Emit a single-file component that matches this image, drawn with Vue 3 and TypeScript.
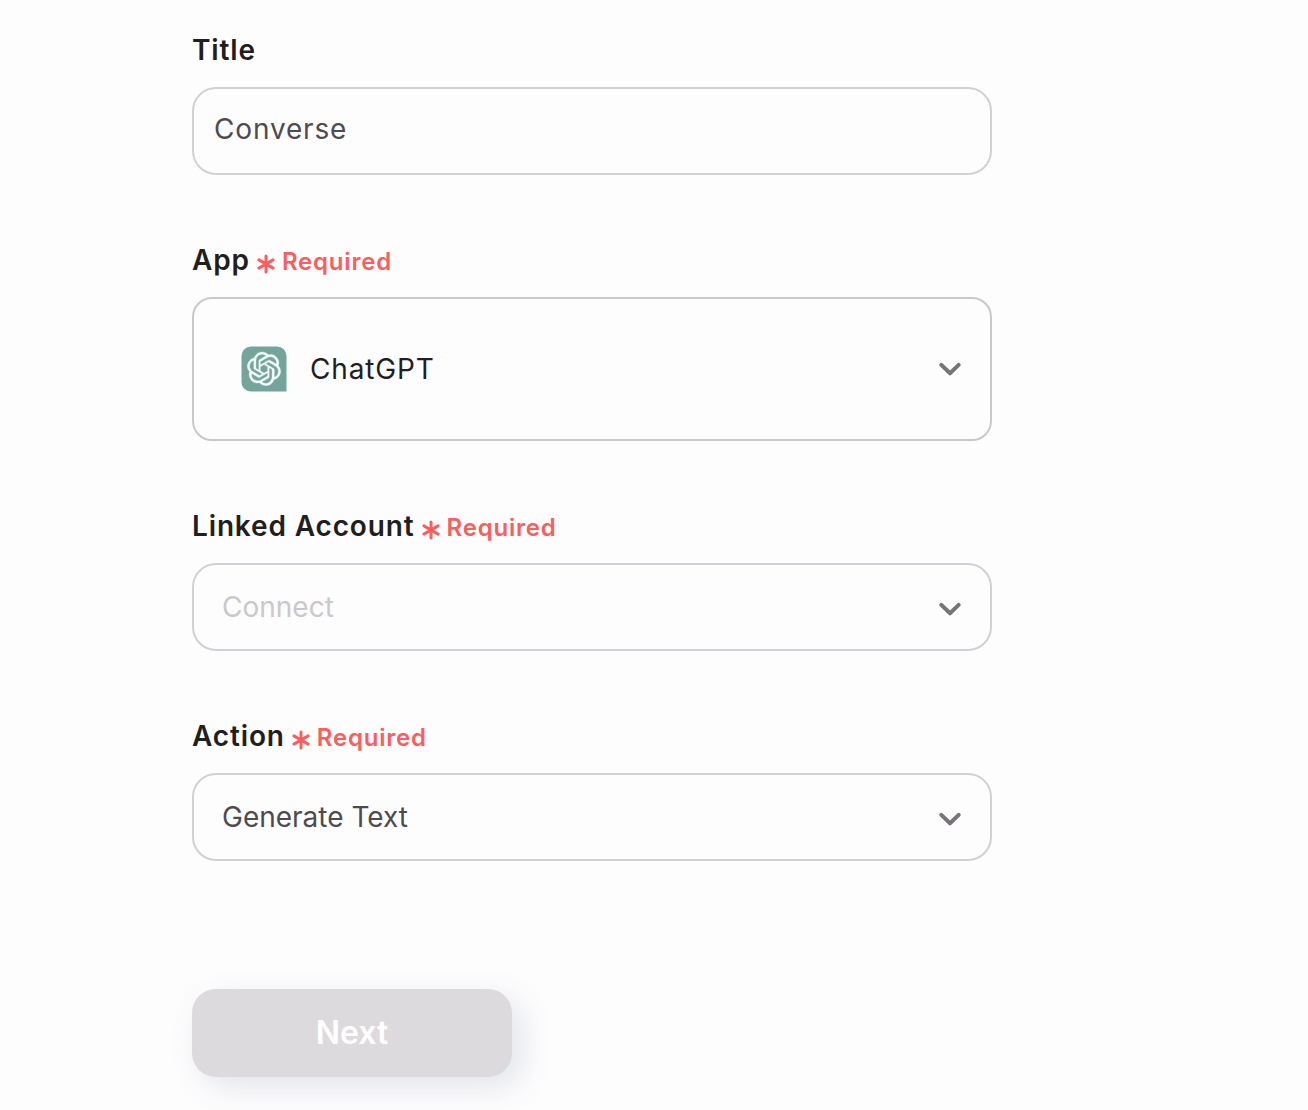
<script setup lang="ts">
interface Field {
  id: string
  label: string
  required: boolean
  kind: 'input' | 'app' | 'select'
  value: string
  placeholder?: boolean
}

const fields: Field[] = [
  { id: 'title', label: 'Title', required: false, kind: 'input', value: 'Converse' },
  { id: 'app', label: 'App', required: true, kind: 'app', value: 'ChatGPT' },
  { id: 'account', label: 'Linked Account', required: true, kind: 'select', value: 'Connect', placeholder: true },
  { id: 'action', label: 'Action', required: true, kind: 'select', value: 'Generate Text' },
]
</script>

<template>
  <main class="page">
    <form class="form" @submit.prevent>
      <section v-for="field in fields" :key="field.id" class="field">
        <div class="heading">
          <span class="label">{{ field.label }}</span>
          <span v-if="field.required" class="required">
            <svg class="star" width="18" height="20" viewBox="0 0 18 20" aria-hidden="true">
              <path d="M9 1.9V18.1M1.9 5.9L16.1 14.1M16.1 5.9L1.9 14.1" />
            </svg>
            <span class="required-text">Required</span>
          </span>
        </div>
        <div class="control" :class="[field.kind, { placeholder: field.placeholder }]">
          <svg v-if="field.kind === 'app'" class="logo" width="46" height="46" viewBox="0 0 46 46" aria-hidden="true">
            <path fill="#73a59a" d="M10 .5H36A9.5 9.5 0 0 1 45.500 10V45.500H10A9.500 9.500 0 0 1 .5 36V10A9.500 9.500 0 0 1 10 .5Z" />
            <g transform="translate(6.200 6) scale(1.4)">
              <path fill="#f4fbf9" stroke="#f4fbf9" stroke-width=".25" d="M22.2819 9.8211a5.9847 5.9847 0 0 0-.5157-4.9108 6.0462 6.0462 0 0 0-6.5098-2.9A6.0651 6.0651 0 0 0 4.9807 4.1818a5.9847 5.9847 0 0 0-3.9977 2.9 6.0462 6.0462 0 0 0 .7427 7.0966 5.98 5.98 0 0 0 .511 4.9107 6.051 6.051 0 0 0 6.5146 2.9001A5.9847 5.9847 0 0 0 13.2599 24a6.0557 6.0557 0 0 0 5.7718-4.2058 5.9894 5.9894 0 0 0 3.9977-2.9001 6.0557 6.0557 0 0 0-.7475-7.0729zm-9.022 12.6081a4.4755 4.4755 0 0 1-2.8764-1.0408l.1419-.0804 4.7783-2.7582a.7948.7948 0 0 0 .3927-.6813v-6.7369l2.02 1.1686a.071.071 0 0 1 .038.052v5.5826a4.504 4.504 0 0 1-4.4945 4.4944zm-9.6607-4.1254a4.4708 4.4708 0 0 1-.5346-3.0137l.142.0852 4.783 2.7582a.7712.7712 0 0 0 .7806 0l5.8428-3.3685v2.3324a.0804.0804 0 0 1-.0332.0615L9.74 19.9502a4.4992 4.4992 0 0 1-6.1408-1.6464zM2.3408 7.8956a4.485 4.485 0 0 1 2.3655-1.9728V11.6a.7664.7664 0 0 0 .3879.6765l5.8144 3.3543-2.0201 1.1685a.0757.0757 0 0 1-.071 0l-4.8303-2.7865A4.504 4.504 0 0 1 2.3408 7.872zm16.5963 3.8558L13.1038 8.364 15.1192 7.2a.0757.0757 0 0 1 .071 0l4.8303 2.7913a4.4944 4.4944 0 0 1-.6765 8.1042v-5.6772a.79.79 0 0 0-.407-.667zm2.0107-3.0231l-.142-.0852-4.7735-2.7818a.7759.7759 0 0 0-.7854 0L9.409 9.2297V6.8974a.0662.0662 0 0 1 .0284-.0615l4.8303-2.7866a4.4992 4.4992 0 0 1 6.6802 4.66zM8.3065 12.863l-2.02-1.1638a.0804.0804 0 0 1-.038-.0567V6.0742a4.4992 4.4992 0 0 1 7.3757-3.4537l-.142.0805L8.704 5.459a.7948.7948 0 0 0-.3927.6813zm1.0976-2.3654l2.602-1.4998 2.6069 1.4998v2.9994l-2.5974 1.4997-2.6067-1.4997Z" />
            </g>
          </svg>
          <span class="value">{{ field.value }}</span>
          <svg v-if="field.kind !== 'input'" class="chevron" width="24" height="16" viewBox="0 0 24 16" aria-hidden="true">
            <path d="M3.300 3.900L12 12.300L20.700 3.900" />
          </svg>
        </div>
      </section>
      <button class="next" type="submit">Next</button>
    </form>
  </main>
</template>

<style>
body {
  background: #fefdfe;
}
</style>

<style scoped>
.page {
  box-sizing: border-box;
  height: 1110px;
  overflow: hidden;
  padding: 32px 0 0 192px;
  background: #fefdfe;
  font-family: Inter, "Liberation Sans", sans-serif;
}

.form {
  display: flex;
  flex-direction: column;
  width: 800px;
}

.field {
  display: flex;
  flex-direction: column;
  gap: 19px;
  margin-bottom: 67px;
}

.heading {
  display: flex;
  align-items: center;
  height: 36px;
}

.label {
  color: #1f1e21;
  font-size: 28px;
  font-weight: 600;
  line-height: 36px;
  letter-spacing: 0.86px;
}

.required {
  display: flex;
  align-items: center;
  gap: 7px;
  margin: 3px 0 0 7px;
  color: #fa5f60;
}

.star {
  margin-top: 4px;
  fill: none;
  stroke: currentColor;
  stroke-width: 3;
  stroke-linecap: round;
}

.required-text {
  font-size: 24px;
  font-weight: 600;
  line-height: 32px;
  letter-spacing: 0.8px;
}

.control {
  box-sizing: border-box;
  display: flex;
  align-items: center;
  height: 88px;
  padding: 0 28px;
  border: 2px solid #d2d0d4;
  border-radius: 24px;
  color: #4d4b4f;
  font-size: 28px;
  line-height: 36px;
  letter-spacing: 0.84px;
}

.input {
  padding: 0 20px 4px;
}

.select {
  letter-spacing: 0;
}

.app {
  height: 144px;
  padding-left: 47px;
  border-color: #c9c8ca;
  border-radius: 20px;
  color: #1f1e21;
}

.placeholder .value {
  color: #c9c8cb;
}

.logo {
  margin-right: 23px;
}

.chevron {
  margin: 3px 0 0 auto;
  fill: none;
  stroke: #767477;
  stroke-width: 4;
  stroke-linecap: round;
  stroke-linejoin: round;
}

.app .chevron {
  margin-top: 0;
}

.next {
  width: 320px;
  height: 88px;
  margin-top: 61px;
  padding: 0;
  border: 0;
  border-radius: 24px;
  background: #dddadd;
  box-shadow: 10px 10px 32px rgba(30, 60, 90, 0.13);
  color: #fff;
  font-family: inherit;
  font-size: 32px;
  font-weight: 600;
  line-height: 40px;
}
</style>
